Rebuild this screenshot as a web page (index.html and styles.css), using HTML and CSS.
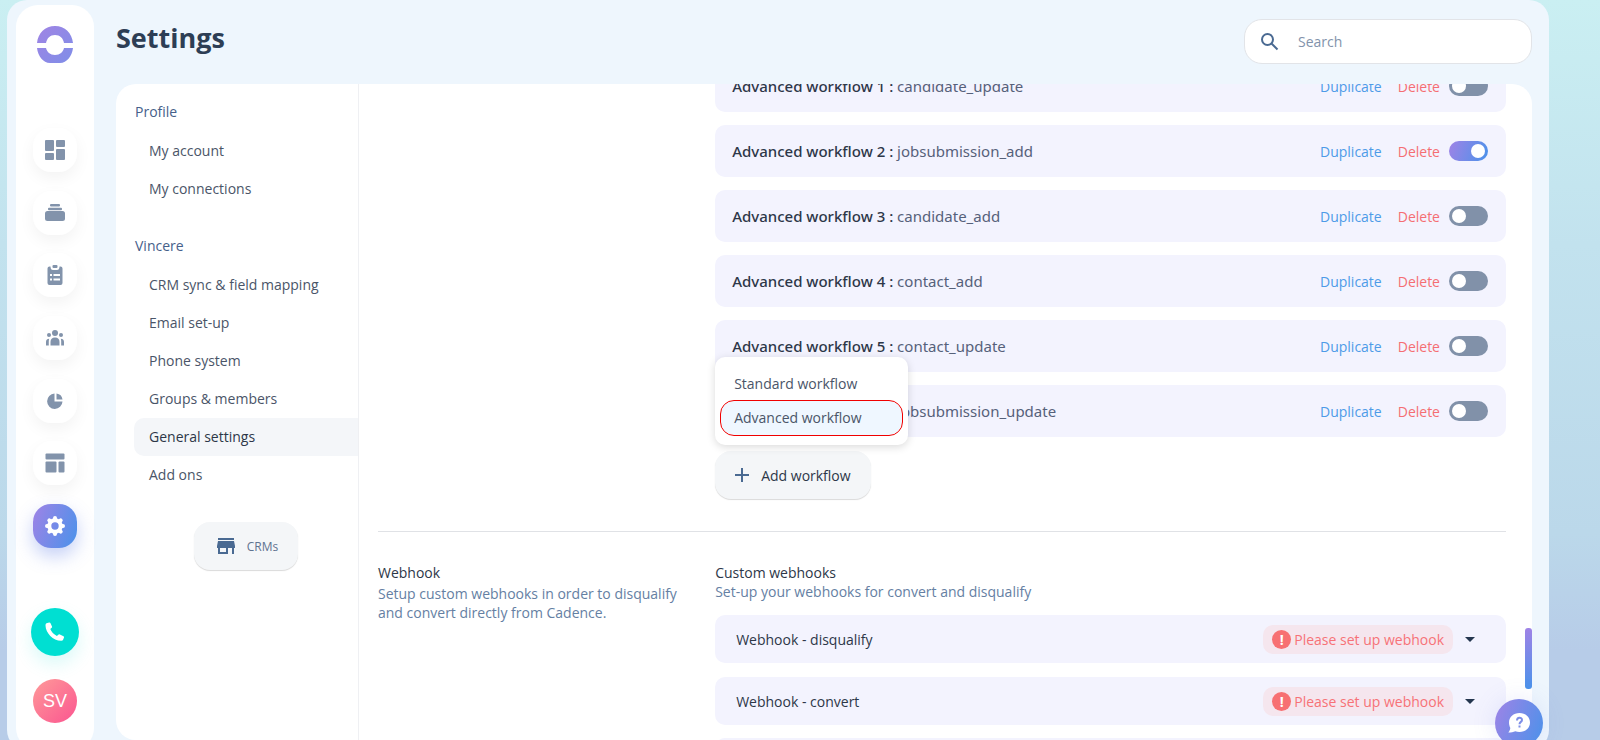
FILE: index.html
```html
<!DOCTYPE html>
<html lang="en">

<head>
    <meta charset="UTF-8">
    <meta name="viewport" content="width=device-width, initial-scale=1.0">
    <title>Settings</title>
    <link rel="stylesheet" href="styles.css">
</head>

<body>
    <div class="app">
        <!-- Icon bar -->
        <nav class="sidebar" aria-label="Main">
            <a href="#" class="logo" aria-label="Home">
                <svg width="36" height="37" viewBox="0 0 36 37">
                    <defs>
                        <linearGradient id="logoFill" x1="0" y1="0" x2="1" y2="1">
                            <stop offset="0" stop-color="#a084e4" />
                            <stop offset="1" stop-color="#7f8ee8" />
                        </linearGradient>
                    </defs>
                    <path fill="url(#logoFill)" d="M0 17C1 7 8 0 18 0s17 7 18 17h-9c-1-5-4-8-9-8s-8 3-9 8zM0 22h9c1 4 4 7 9 7s8-3 9-7h9c-1 8-6 15-13 15H13C6 37 1 30 0 22z" />
                </svg>
            </a>
            <div class="nav-list">
                <a href="#" class="nav-btn" aria-label="Dashboard">
                    <svg width="20" height="20" viewBox="0 0 20 20">
                        <rect x="0" y="0" width="9" height="11" rx="1" />
                        <rect x="11" y="0" width="9" height="7" rx="1" />
                        <rect x="0" y="13" width="9" height="7" rx="1" />
                        <rect x="11" y="9" width="9" height="11" rx="1" />
                    </svg>
                </a>
                <a href="#" class="nav-btn" aria-label="Cadences">
                    <svg width="20" height="20" viewBox="0 0 20 20">
                        <rect x="5" y="1" width="10" height="2.4" rx="1" />
                        <rect x="3" y="4.8" width="14" height="2.4" rx="1" />
                        <rect x="0" y="8" width="20" height="10" rx="2.5" />
                    </svg>
                </a>
                <a href="#" class="nav-btn" aria-label="Tasks">
                    <svg width="20" height="20" viewBox="0 0 20 20">
                        <path fill-rule="evenodd" d="M4.500 1.500H5.500C5.500 4 6.500 5 8 5h4c1.500 0 2.500-1 2.500-3.500h1a2 2 0 0 1 2 2V18a2 2 0 0 1-2 2h-11a2 2 0 0 1-2-2V3.500a2 2 0 0 1 2-2zM5 9v2h2V9zM8.500 9v2H15V9zM5 13.500v2h2v-2zM8.500 13.500v2H15v-2z" />
                        <rect x="7.500" y="0" width="5" height="3" rx="1" />
                    </svg>
                </a>
                <a href="#" class="nav-btn" aria-label="People">
                    <svg width="20" height="20" viewBox="0 0 20 20">
                        <circle cx="10" cy="5" r="3" />
                        <circle cx="4" cy="7" r="2" />
                        <circle cx="16" cy="7" r="2" />
                        <path d="M5.500 17.500V14c0-3 1.500-4.500 4.500-4.500s4.500 1.500 4.500 4.500v3.500zM1 17.500V14c0-2 .8-3 3.200-3.200C3.700 12 3.800 14 3.800 17.500zM19 17.500V14c0-2-.8-3-3.200-3.200.5 1.200.4 3.200.4 6.700z" />
                    </svg>
                </a>
                <a href="#" class="nav-btn" aria-label="Reports">
                    <svg width="20" height="20" viewBox="0 0 20 20">
                        <path d="M9.500 2.500V10.500H17.500A7.700 7.700 0 1 1 9.500 2.500z" />
                        <path d="M11.500 2.500A7 7 0 0 1 17.500 8.500H11.500z" />
                    </svg>
                </a>
                <a href="#" class="nav-btn" aria-label="Templates">
                    <svg width="20" height="20" viewBox="0 0 20 20">
                        <rect x="0.500" y="0.500" width="19" height="6" rx="1" />
                        <rect x="0.500" y="8.500" width="11" height="11" rx="1" />
                        <rect x="13.500" y="8.500" width="6" height="11" rx="1" />
                    </svg>
                </a>
                <a href="#" class="nav-btn active" aria-label="Settings">
                    <svg class="gear" width="20" height="20" viewBox="0 0 20 20">
                        <circle cx="10" cy="10" r="5.700" />
                        <path d="M10 2v1M10 17v1M2 10h1M17 10h1M4.300 4.300l.7.700M15 15l.7.700M15.700 4.300l-.7.700M5 15l-.7.700" />
                    </svg>
                </a>
            </div>
            <button class="call-btn" aria-label="Call">
                <svg width="20" height="20" viewBox="0 0 20 20">
                    <path d="M2.300 1 4.200.5q.8-.2 1.200.6L7 4.500q.3.800-.3 1.300L5.300 7.100c1.100 3 3.400 5.300 6.600 7l1.700-1.600q.6-.5 1.300-.1l3.600 1.900q.7.400.5 1.200l-.8 1.900q-.4 1.300-2 1.400C8 18.700.6 11 .5 3.500.5 2 1 1.300 2.300 1z" />
                </svg>
            </button>
            <button class="avatar">SV</button>
        </nav>

        <div class="page">
            <header class="page-header">
                <h1>Settings</h1>
                <label class="search">
                    <svg width="18" height="18" viewBox="0 0 18 18">
                        <circle cx="6.500" cy="6.500" r="5.500" />
                        <path d="M10.500 10.500 16.500 16.500" />
                    </svg>
                    <input type="search" placeholder="Search" aria-label="Search">
                </label>
            </header>

            <div class="panel">
                <!-- Settings menu -->
                <aside class="menu">
                    <h2>Profile</h2>
                    <ul>
                        <li><a href="#">My account</a></li>
                        <li><a href="#">My connections</a></li>
                    </ul>
                    <h2>Vincere</h2>
                    <ul>
                        <li><a href="#">CRM sync &amp; field mapping</a></li>
                        <li><a href="#">Email set-up</a></li>
                        <li><a href="#">Phone system</a></li>
                        <li><a href="#">Groups &amp; members</a></li>
                        <li><a href="#" class="selected">General settings</a></li>
                        <li><a href="#">Add ons</a></li>
                    </ul>
                    <button class="soft-btn crm-btn">
                        <svg width="18" height="16" viewBox="0 0 18 16">
                            <path d="M1 0h16v2H1zM1 3h16l1 5v2h-1v6h-2v-6h-4v6H1v-6H0V8zM3 10v4h6v-4z" fill-rule="evenodd" />
                        </svg>
                        CRMs
                    </button>
                </aside>

                <main class="content">
                    <section class="setting workflows">
                        <div class="setting-main">
                            <div class="workflow">
                                <p><b>Advanced workflow 1 :</b> candidate_update</p>
                                <button class="link">Duplicate</button>
                                <button class="link delete">Delete</button>
                                <input type="checkbox" class="toggle" aria-label="Enable workflow 1">
                            </div>
                            <div class="workflow">
                                <p><b>Advanced workflow 2 :</b> jobsubmission_add</p>
                                <button class="link">Duplicate</button>
                                <button class="link delete">Delete</button>
                                <input type="checkbox" class="toggle" aria-label="Enable workflow 2" checked>
                            </div>
                            <div class="workflow">
                                <p><b>Advanced workflow 3 :</b> candidate_add</p>
                                <button class="link">Duplicate</button>
                                <button class="link delete">Delete</button>
                                <input type="checkbox" class="toggle" aria-label="Enable workflow 3">
                            </div>
                            <div class="workflow">
                                <p><b>Advanced workflow 4 :</b> contact_add</p>
                                <button class="link">Duplicate</button>
                                <button class="link delete">Delete</button>
                                <input type="checkbox" class="toggle" aria-label="Enable workflow 4">
                            </div>
                            <div class="workflow">
                                <p><b>Advanced workflow 5 :</b> contact_update</p>
                                <button class="link">Duplicate</button>
                                <button class="link delete">Delete</button>
                                <input type="checkbox" class="toggle" aria-label="Enable workflow 5">
                            </div>
                            <div class="workflow">
                                <p><b>Advanced workflow 6 :</b> jobsubmission_update</p>
                                <button class="link">Duplicate</button>
                                <button class="link delete">Delete</button>
                                <input type="checkbox" class="toggle" aria-label="Enable workflow 6">
                            </div>
                            <div class="add-workflow">
                                <button class="soft-btn add-btn">
                                    <svg width="14" height="14" viewBox="0 0 14 14">
                                        <path d="M6 0h2v6h6v2H8v6H6V8H0V6h6z" />
                                    </svg>
                                    Add workflow
                                </button>
                                <div class="dropdown">
                                    <button>Standard workflow</button>
                                    <button class="highlight">Advanced workflow</button>
                                </div>
                            </div>
                        </div>
                    </section>

                    <section class="setting webhooks">
                        <div class="setting-info">
                            <h3>Webhook</h3>
                            <p>Setup custom webhooks in order to disqualify and convert directly from Cadence.</p>
                        </div>
                        <div class="setting-main">
                            <h3>Custom webhooks</h3>
                            <p>Set-up your webhooks for convert and disqualify</p>
                            <button class="webhook">
                                <span class="webhook-name">Webhook - disqualify</span>
                                <span class="warning"><i>!</i>Please set up webhook</span>
                                <span class="caret"></span>
                            </button>
                            <button class="webhook">
                                <span class="webhook-name">Webhook - convert</span>
                                <span class="warning"><i>!</i>Please set up webhook</span>
                                <span class="caret"></span>
                            </button>
                            <div class="webhook-log"></div>
                        </div>
                    </section>
                </main>
                <div class="scroll-thumb"></div>
            </div>
        </div>
    </div>

    <button class="help-btn" aria-label="Help">
        <svg width="22" height="20" viewBox="0 0 22 20">
            <path fill="#fff" d="M11.500 0C17.500 0 22 4 22 9.500S17.500 19 11.500 19c-1.500 0-3-.3-4.200-.8C5.500 19 3 19.500.3 19.500c1.300-1.500 1.800-2.800 2-4.500C1.500 13.300 1 11.500 1 9.500 1 4 5.500 0 11.500 0z" />
            <path fill="none" stroke="#7d8ee8" stroke-width="2" d="M9 7.500c0-3.500 5-3.500 5-.5 0 2-2.500 1.800-2.500 4.200M11.500 12.500v2" />
        </svg>
    </button>
</body>

</html>
```
FILE: styles.css
```css
* {
    box-sizing: border-box;
}

body {
    margin: 0;
    height: 100vh;
    overflow: hidden;
    font-family: "Open Sans", "Noto Sans", sans-serif;
    font-size: 14px;
    line-height: 19px;
    color: #4a5568;
    background: linear-gradient(#caeff2, #c2e2ee 33%, #bbd8ea 72%, #b7cce8 88%);
}

h1, h2, h3, p, ul {
    margin: 0;
    padding: 0;
}

ul {
    list-style: none;
}

a {
    color: inherit;
    text-decoration: none;
}

button {
    border: none;
    padding: 0;
    background: none;
    font: inherit;
    color: inherit;
    cursor: pointer;
}

.app {
    display: flex;
    height: calc(100vh + 10px);
    margin: 0 51px 0 7px;
    padding: 5px 17px 0 9px;
    border-radius: 20px;
    background-color: #eef6fd;
}

/* icon bar */
.sidebar {
    display: flex;
    flex-direction: column;
    align-items: center;
    flex-shrink: 0;
    width: 78px;
    padding-top: 21px;
    border-radius: 22px;
    background-color: #fff;
}

.logo {
    height: 37px;
}

.nav-list {
    display: flex;
    flex-direction: column;
    justify-content: space-between;
    height: 420px;
    margin-top: 65px;
}

.nav-btn {
    display: flex;
    align-items: center;
    justify-content: center;
    width: 44px;
    height: 44px;
    border-radius: 18px;
    background-color: #fff;
    box-shadow: 0 6px 16px rgba(0, 0, 0, 0.05);
}

.nav-btn svg {
    fill: #8293ab;
}

.nav-btn.active {
    background: linear-gradient(110deg, #9f83e6, #4a92ea);
    box-shadow: 0 8px 18px rgba(90, 120, 230, 0.35);
}

.nav-btn .gear {
    fill: none;
    stroke: #fff;
    stroke-width: 4;
    stroke-linecap: round;
}

.call-btn {
    display: flex;
    align-items: center;
    justify-content: center;
    width: 48px;
    height: 48px;
    margin-top: 60px;
    border-radius: 50%;
    background-color: #00dfd2;
    box-shadow: 0 8px 18px rgba(0, 223, 210, 0.15);
}

.call-btn svg {
    fill: #fff;
}

.avatar {
    width: 44px;
    height: 44px;
    margin-top: 23px;
    border-radius: 50%;
    background: linear-gradient(135deg, #fe9a99, #fb5590);
    color: #fff;
    font-family: "Liberation Sans", Arial, sans-serif;
    font-size: 18px;
}

/* page */
.page {
    display: flex;
    flex-direction: column;
    flex: 1;
    min-width: 0;
    padding: 0 0 10px 22px;
}

.page-header {
    display: flex;
    align-items: flex-start;
    justify-content: space-between;
    height: 79px;
    padding-top: 14px;
}

h1 {
    font-size: 27px;
    font-weight: 700;
    line-height: 38px;
    color: #2d3e55;
}

.search {
    display: flex;
    align-items: center;
    gap: 17px;
    width: 288px;
    height: 45px;
    padding: 0 16px;
    border: 1px solid #e2e4e8;
    border-radius: 18px;
    background-color: #fff;
}

.search svg {
    fill: none;
    stroke: #4a6a92;
    stroke-width: 2;
}

.search input {
    flex: 1;
    min-width: 0;
    border: none;
    outline: none;
    font: inherit;
}

.search input::placeholder {
    color: #8293ab;
}

.panel {
    display: flex;
    flex: 1;
    min-height: 0;
    position: relative;
    border-radius: 20px;
    background-color: #fff;
    overflow: hidden;
}

.menu {
    flex-shrink: 0;
    width: 243px;
    padding: 18px 0 0 18px;
    border-right: 1px solid #eff0f3;
}

.menu h2 {
    padding: 0 1px 2px;
    font-size: 14px;
    font-weight: 400;
    color: #46608a;
}

.menu ul {
    margin: 9px 0 28px;
}

.menu li a {
    display: block;
    padding: 9px 0 10px 15px;
    border-radius: 10px 0 0 10px;
}

.menu li a.selected {
    background-color: #f4f6f9;
    color: #2d3748;
    font-weight: 500;
}

.soft-btn {
    display: flex;
    align-items: center;
    height: 48px;
    border-radius: 16px;
    background-color: #f4f6f8;
    box-shadow: 0 1px 1px rgba(0, 0, 0, 0.15);
}

.soft-btn svg {
    fill: #4a6a92;
}

.crm-btn {
    gap: 12px;
    margin: 0 auto;
    padding: 0 20px 0 23px;
    font-size: 12px;
    color: #5f7390;
}

.content {
    flex: 1;
    min-width: 0;
    padding: 0 26px 0 19px;
}

.setting {
    display: grid;
    grid-template-columns: 5fr 13fr;
    column-gap: 33px;
}

.setting-main {
    grid-column: 2;
}

/* the list is scrolled under the header */
.workflows {
    margin-top: -24px;
    padding-bottom: 32px;
    border-bottom: 1px solid #e0e2e6;
}

.workflow {
    display: flex;
    align-items: center;
    height: 52px;
    margin-bottom: 13px;
    padding: 0 18px 0 17px;
    border-radius: 10px;
    background-color: #f3f3fe;
}

.workflow p {
    flex: 1;
    font-family: "Noto Sans", "Open Sans", sans-serif;
    font-size: 15px;
    color: #56617a;
}

.workflow b {
    font-weight: 500;
    color: #2d3748;
}

.link {
    margin-right: 16px;
    color: #4d9be8;
}

.link.delete {
    margin-right: 9px;
    color: #f56e73;
}

.toggle {
    appearance: none;
    display: flex;
    width: 39px;
    height: 20px;
    margin: 0;
    padding: 3px;
    border-radius: 10px;
    background-color: #8191a9;
    cursor: pointer;
}

.toggle::before {
    content: "";
    width: 14px;
    height: 14px;
    border-radius: 50%;
    background-color: #fff;
}

.toggle:checked {
    justify-content: flex-end;
    background: linear-gradient(110deg, #9f83e6, #4a92ea);
}

.add-workflow {
    position: relative;
    width: max-content;
    padding-top: 1px;
}

.add-btn {
    gap: 12px;
    padding: 0 20px;
    font-weight: 500;
    color: #2d3748;
}

.dropdown {
    position: absolute;
    left: 0;
    bottom: calc(100% + 5px);
    width: 193px;
    padding: 10px 6px;
    border-radius: 10px;
    background-color: #fff;
    box-shadow: 0 2px 8px rgba(0, 0, 0, 0.15);
}

.dropdown button {
    display: block;
    width: 100%;
    height: 34px;
    padding: 0 0 2px 13px;
    border-radius: 13px;
    text-align: left;
}

.dropdown .highlight {
    outline: 1px solid #f00000;
    background-color: #eff7ff;
}

/* webhooks */
.webhooks {
    padding-top: 31px;
}

h3 {
    font-size: 14px;
    font-weight: 500;
    color: #2d3748;
}

.webhooks p {
    color: #6580a3;
}

.setting-info p {
    margin-top: 2px;
}

.webhook {
    display: flex;
    align-items: center;
    width: 100%;
    height: 48px;
    margin-top: 14px;
    padding: 0 31px 0 21px;
    border-radius: 10px;
    background-color: #f3f3fe;
    text-align: left;
}

.webhook-name {
    flex: 1;
    font-weight: 500;
    color: #2d3748;
}

.warning {
    display: flex;
    align-items: center;
    gap: 3px;
    height: 29px;
    padding: 0 9px;
    border-radius: 10px;
    background-color: #f5e6ee;
    color: #f77277;
}

.warning i {
    width: 19px;
    height: 19px;
    border-radius: 50%;
    background-color: #f77072;
    color: #fff;
    font-style: normal;
    font-weight: 700;
    text-align: center;
}

.caret {
    margin-left: 12px;
    border: 5px solid transparent;
    border-top-color: #24364e;
    border-bottom: none;
}

.webhook-log {
    height: 48px;
    margin-top: 13px;
    border-radius: 10px;
    background-color: #f3f3fe;
}

.scroll-thumb {
    position: absolute;
    right: 0;
    bottom: 51px;
    width: 7px;
    height: 61px;
    border-radius: 3px;
    background: linear-gradient(#9f83e6, #4a92ea);
}

.help-btn {
    display: flex;
    align-items: center;
    justify-content: center;
    position: fixed;
    right: 57px;
    bottom: -7px;
    width: 48px;
    height: 48px;
    border-radius: 50%;
    background: linear-gradient(110deg, #9f83e6, #4a92ea);
    box-shadow: 0 0 24px rgba(110, 120, 230, 0.15);
}
```
